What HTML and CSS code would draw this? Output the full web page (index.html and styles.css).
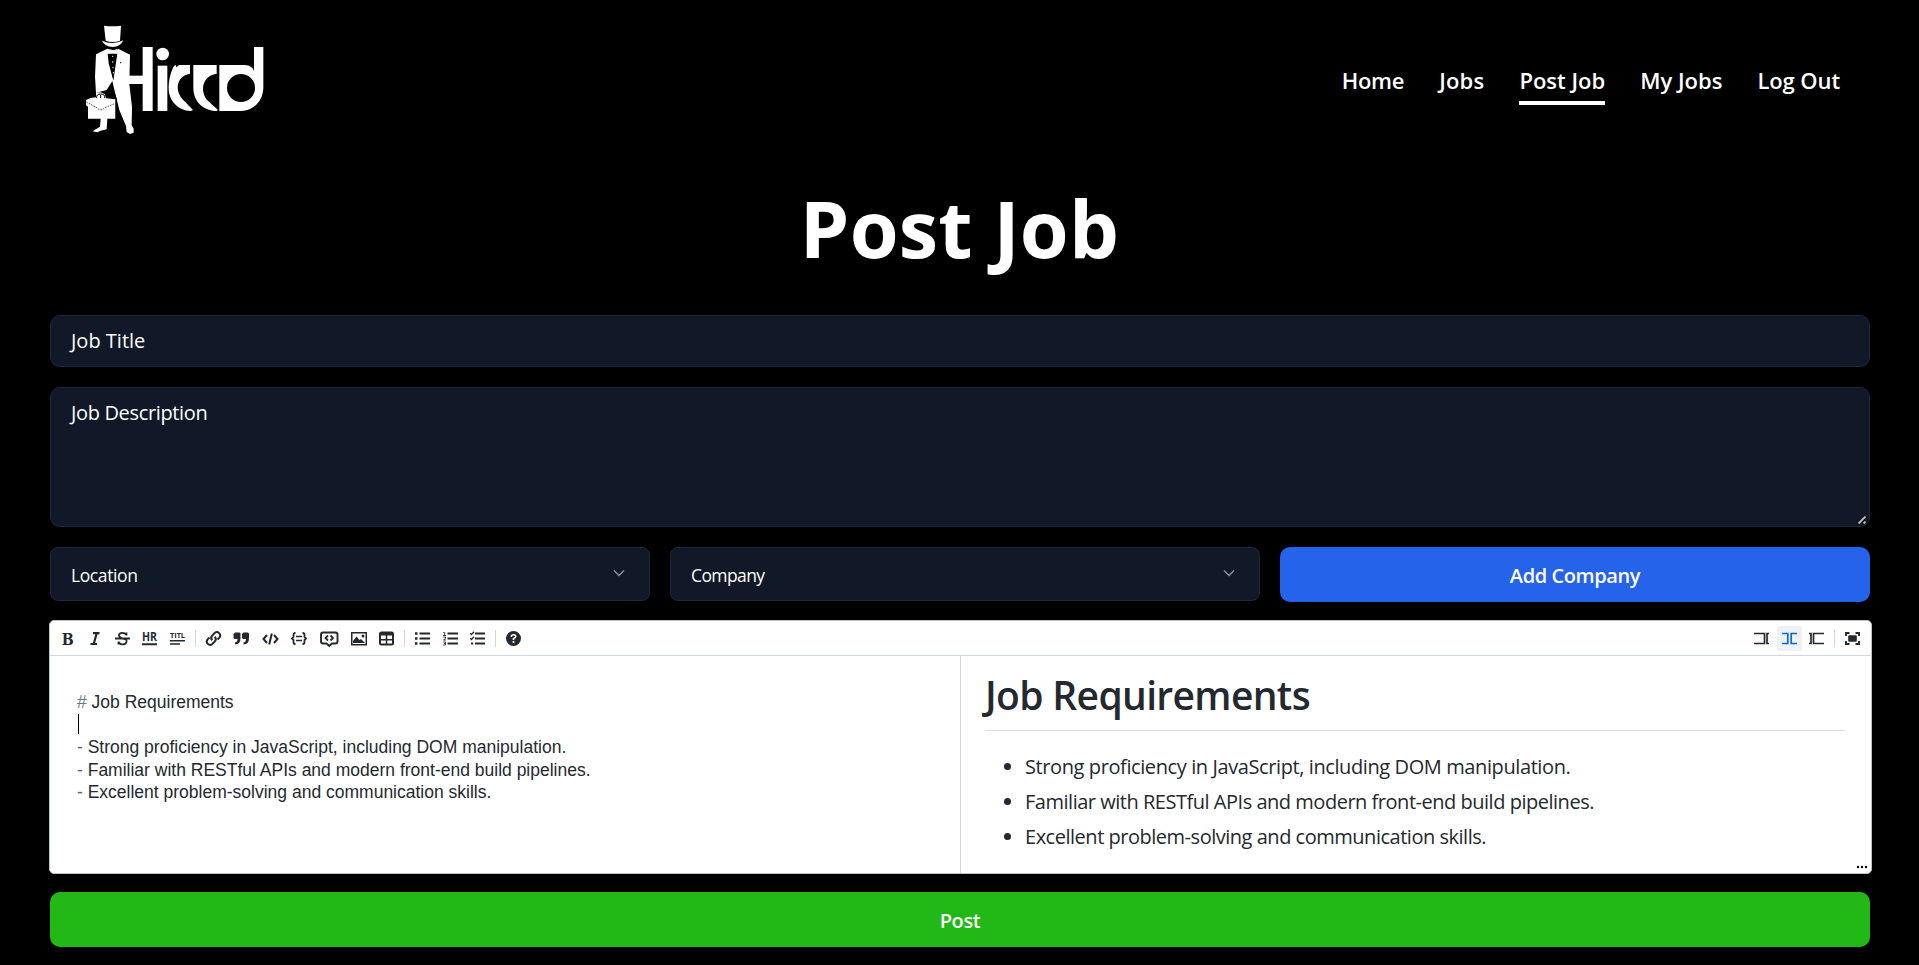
FILE: index.html
```html
<!DOCTYPE html>
<html lang="en">
<head>
<meta charset="utf-8">
<title>Post Job</title>
<link rel="stylesheet" href="styles.css">
</head>
<body>
<header class="header">
  <svg class="logo" viewBox="0 0 660 420" role="img" aria-label="Hiccd">
    <g fill="#fff">
      <path d="M102 47Q127 51 153 47L150 92Q128 100 107 92Z"/>
      <path d="M96 92Q128 106 160 91Q152 110 128 111Q104 110 96 92Z"/>
      <path d="M112 116L78 133L75 200L78 248L92 247L104 252L108 265L136 268V326H112L110 358L92 362L82 367L68 364L90 350L92 326H54V290L48 286V270L62 264L78 262V248L110 240L127 213L132 235L148 300L168 348L170 366L180 372L191 368V356L185 346L186 290L178 222L180 134L146 117L134 122L128 120Z"/>
      <rect x="170" y="197" width="50" height="25"/>
      <rect x="218" y="111" width="30" height="192"/>
      <circle cx="278" cy="132" r="19"/>
      <rect x="263" y="167" width="29" height="136"/>
      <path d="M360 165V192C325 194 306 240 345 275L369 300L362 303C324 302 296 272 296 234C296 210 302 186 312 168L318 165V172L328 165Z"/>
      <path d="M370 165H440V192C402 194 384 240 415 274L444 300L440 303C400 303 370 274 370 234Z"/>
      <path fill-rule="evenodd" d="M448 165H525Q546 167 552 183V111H580V234A67 69 0 0 1 513 303H448ZM471 234A42 42 0 1 0 555 234A42 42 0 1 0 471 234Z"/>
    </g>
    <path d="M113 131L142 131L137 165L130 212L124 190L116 160Z"/>
    <path d="M112 117L126 122L142 117V131L127 126L113 131Z" fill="#fff"/>
    <g fill="#fff"><circle cx="128" cy="139" r="2"/><circle cx="128" cy="156" r="2"/><circle cx="129" cy="172" r="2"/><circle cx="130" cy="188" r="2"/></g>
    <path d="M49 276L82 294Q92 305 103 294L136 280" fill="none" stroke="#000" stroke-width="2" stroke-dasharray="5 3"/>
    <path d="M80 264Q78 252 92 252Q106 252 104 264M92 254V264" fill="none" stroke="#000" stroke-width="3"/>
    <path d="M128 236L139 268V326" fill="none" stroke="#000" stroke-width="3"/>
    <circle cx="152" cy="158" r="2"/>
  </svg>
  <nav class="nav">
    <a class="nav-link">Home</a>
    <a class="nav-link">Jobs</a>
    <a class="nav-link is-active">Post Job</a>
    <a class="nav-link">My Jobs</a>
    <a class="nav-link">Log Out</a>
  </nav>
</header>
<main>
  <h1 class="title">Post Job</h1>
  <form class="form">
    <div class="field">Job Title</div>
    <div class="field area">Job Description
      <svg class="grip" viewBox="0 0 10 10"><path d="M1 9L9 1M6 9L9 6" stroke="#000" stroke-width="3"/><path d="M1.500 8.500L8.500 1.500M6.500 8.500L8.500 6.500" stroke="#b9bcc2" stroke-width="1.800"/></svg>
    </div>
    <div class="row">
      <div class="select location"><span>Location</span><svg class="chev" viewBox="0 0 14 14"><path d="M2 4.500L7 9.500L12 4.500"/></svg></div>
      <div class="select"><span class="company">Company</span><svg class="chev" viewBox="0 0 14 14"><path d="M2 4.500L7 9.500L12 4.500"/></svg></div>
      <div class="button blue">Add Company</div>
    </div>
    <section class="editor">
      <div class="toolbar">
        <div class="tools">
          <b class="tool"><svg width="15" viewBox="0 0 15 15"><text class="serif" x="1.800" y="13.700" font-size="17" textLength="12" lengthAdjust="spacingAndGlyphs">B</text></svg></b>
          <b class="tool"><svg width="15" viewBox="0 0 15 15"><path d="M6 2.200H12.500M3.500 13H10M9.700 2.200L6.700 13" fill="none" stroke-width="2.200"/></svg></b>
          <b class="tool"><svg width="15" viewBox="0 0 15 15"><path d="M11.500 4.500V1.500M11.300 4C10 1 4 1 4 4.500C4 6 6 7 8 7.500C11 8 12 9 11.500 11C10.500 14.500 4.500 14 3.700 11M3.500 13.500V10.500M0 7.500H15" fill="none" stroke-width="1.800"/></svg></b>
          <b class="tool"><svg width="15" viewBox="0 0 15 15"><text class="sans" x="0" y="10" font-size="11.500" textLength="15" lengthAdjust="spacingAndGlyphs">HR</text><path d="M0 13.300H15" stroke-width="2"/></svg></b>
          <b class="tool"><svg width="15" viewBox="0 0 15 15"><text class="sans" x="0" y="7.200" font-size="7.500" textLength="15" lengthAdjust="spacingAndGlyphs">TITL</text><path d="M0 9.800H15M0 13H10" stroke-width="1.600"/></svg></b>
          <i class="sep"></i>
          <b class="tool"><svg width="15" viewBox="0 0 15 15"><g fill="none" stroke-width="2"><path d="M6.300 9.200A3.400 3.400 0 0 1 6.100 4.600L8.700 2A3.300 3.300 0 0 1 13.400 6.600L11.500 8.500"/><path d="M8.700 5.800A3.400 3.400 0 0 1 8.900 10.400L6.300 13A3.300 3.300 0 0 1 1.600 8.400L3.500 6.500"/></g></svg></b>
          <b class="tool"><svg width="16" viewBox="0 0 16 15"><path stroke="none" d="M2 1.500H6.500L7.500 2.500V7Q7.500 13.500 2 13.500V11.500Q4.500 11 4.500 8H1.500L.500 7V3ZM10.500 1.500H15L16 2.500V7Q16 13.500 10.500 13.500V11.500Q13 11 13 8H10L9 7V3Z"/></svg></b>
          <b class="tool"><svg width="17" viewBox="0 0 17 15"><path d="M5 4L1.500 8L5 12M12 4L15.500 8L12 12M9.800 2.500L7.200 13.500" fill="none" stroke-width="2"/></svg></b>
          <b class="tool"><svg width="16" viewBox="0 0 16 15"><path d="M4.500 2H4Q2.500 2 2.500 4V6L1 7.500L2.500 9V11Q2.500 13 4 13H4.500M11.500 2H12Q13.500 2 13.500 4V6L15 7.500L13.500 9V11Q13.500 13 12 13H11.500" fill="none" stroke-width="1.800"/><path d="M5 5.500H11M5 9.500H11" stroke-width="1.400"/></svg></b>
          <b class="tool"><svg width="18.500" viewBox="0 0 18.500 15"><path d="M3 1.500H15.500Q17.500 1.500 17.500 3.500V10.500Q17.500 12.500 15.500 12.500H12L9.250 15L6.500 12.500H3Q1 12.500 1 10.500V3.500Q1 1.500 3 1.500Z" fill="none" stroke-width="1.900"/><path d="M8 4.500L5.500 7L8 9.500M10.500 4.500L13 7L10.500 9.500" fill="none" stroke-width="1.800"/></svg></b>
          <b class="tool"><svg width="16" viewBox="0 0 16 15"><rect x=".750" y="1.750" width="14.500" height="12" fill="none" stroke-width="1.500"/><path stroke="none" d="M2 12V10L5.500 5.500L8.500 9L10 8L14 12Z"/><circle cx="12" cy="5" r="1.500" stroke="none"/></svg></b>
          <b class="tool"><svg width="15" viewBox="0 0 15 15"><rect x="1" y="1.500" width="13" height="12" rx="1.500" fill="none" stroke-width="2"/><path d="M1 3H14" stroke-width="3"/><path d="M7.500 4V13M1 8.700H14" stroke-width="1.500"/></svg></b>
          <i class="sep"></i>
          <b class="tool"><svg width="15" viewBox="0 0 15 15"><path d="M4.500 2.500H15M4.500 7.500H15M4.500 12.500H15" stroke-width="1.800"/><path d="M0 2.500H2.500M0 7.500H2.500M0 12.500H2.500" stroke-width="2.400"/></svg></b>
          <b class="tool"><svg width="15" viewBox="0 0 15 15"><path d="M4.500 2.500H15M4.500 7.500H15M4.500 12.500H15" stroke-width="1.800"/><path d="M.300 1.500H1.700V4.500M0 4.500H3M.300 6H2.500V7.500L.500 9H3M.300 11H2.500V14H.300M1 12.500H2.500" fill="none" stroke-width=".9"/></svg></b>
          <b class="tool"><svg width="15" viewBox="0 0 15 15"><path d="M5 2.500H15M5 7.500H15M5 12.500H15" stroke-width="1.800"/><path d="M.200 2.300L1.500 3.500L4 .800M.200 7.300L1.500 8.500L4 5.800" fill="none" stroke-width="1.300"/><path d="M1 12.500H3.200" stroke-width="2.200"/></svg></b>
          <i class="sep"></i>
          <b class="tool"><svg width="15" viewBox="0 0 15 15"><circle cx="7.500" cy="7.500" r="7.500" stroke="none"/><path d="M5.200 5.800Q5.400 3.700 7.500 3.700Q9.800 3.700 9.700 5.600Q9.500 7 7.500 7.500V9" fill="none" stroke="#fff" stroke-width="1.600"/><circle cx="7.500" cy="11" r="1.100" fill="#fff" stroke="none"/></svg></b>
        </div>
        <div class="tools">
          <b class="tool"><svg width="15" viewBox="0 0 15 15"><path d="M0 2.500H10.500V12.500H0M15 2.500H13V12.500H15" fill="none" stroke-width="1.700"/></svg></b>
          <b class="tool is-on"><svg width="15" viewBox="0 0 15 15"><path d="M0 2.500H5.800V12.500H0M15 2.500H9.200V12.500H15" fill="none" stroke-width="1.700"/></svg></b>
          <b class="tool"><svg width="15" viewBox="0 0 15 15"><path d="M0 2.500H2V12.500H0M15 2.500H4.500V12.500H15" fill="none" stroke-width="1.700"/></svg></b>
          <i class="sep"></i>
          <b class="tool"><svg width="15" viewBox="0 0 15 15"><rect x="3.200" y="4.200" width="8.600" height="6.600" rx="1" stroke="none"/><path d="M1 5V2H4.500M10.500 2H14V5M14 10V13H10.500M4.500 13H1V10" fill="none" stroke-width="1.900"/></svg></b>
        </div>
      </div>
      <div class="panes">
        <div class="source">
          <p><span class="mark">#</span> Job Requirements</p>
          <p class="caret-line"><span class="caret"></span></p>
          <p><span class="dash">-</span> Strong proficiency in JavaScript, including DOM manipulation.</p>
          <p><span class="dash">-</span> Familiar with RESTful APIs and modern front-end build pipelines.</p>
          <p><span class="dash">-</span> Excellent problem-solving and communication skills.</p>
        </div>
        <div class="preview">
          <h2>Job Requirements</h2>
          <ul>
            <li>Strong proficiency in JavaScript, including DOM manipulation.</li>
            <li>Familiar with RESTful APIs and modern front-end build pipelines.</li>
            <li>Excellent problem-solving and communication skills.</li>
          </ul>
          <svg class="dots" viewBox="0 0 12 4"><circle cx="2" cy="2" r="1.200"/><circle cx="6" cy="2" r="1.200"/><circle cx="10" cy="2" r="1.200"/></svg>
        </div>
      </div>
    </section>
    <div class="button green">Post</div>
  </form>
</main>
</body>
</html>
```
FILE: styles.css
```css
* { box-sizing: border-box; }
body { margin: 0; height: 965px; overflow: hidden; background: #000; color: #fff; font-family: "Open Sans", "Noto Sans", sans-serif; }
svg { display: block; }
.header { height: 161px; padding: 0 79px 0 70px; display: flex; align-items: center; justify-content: space-between; }
.logo { width: 220px; height: 140px; margin-top: -1px; }
.nav { display: flex; gap: 35px; }
.nav-link { padding: 8px 0 4px; border-bottom: 4px solid transparent; line-height: 33px; font-size: 22px; font-weight: 600; letter-spacing: 0; white-space: nowrap; }
.nav-link:nth-child(1) { letter-spacing: -0.3px; }
.nav-link:nth-child(2) { letter-spacing: 0.2px; }
.nav-link:nth-child(5) { letter-spacing: -0.1px; }
.is-active { border-color: #fff; }
.title { margin: 0; padding-top: 27px; line-height: 80px; font-size: 79px; font-weight: 700; letter-spacing: 0.2px; text-align: center; }
.form { margin: 47px 49px 0 50px; display: flex; flex-direction: column; }
.field { position: relative; height: 52px; padding: 11px 20px; border: 1px solid #1f2937; border-radius: 10px; background: #111827; font-size: 20px; line-height: 28px; letter-spacing: 0; }
.area { height: 140px; margin-top: 20px; letter-spacing: -0.35px; }
.grip { position: absolute; right: 2px; bottom: 1px; width: 10px; height: 10px; }
.row { display: flex; gap: 20px; margin-top: 20px; height: 55px; }
.select { width: 590px; height: 54px; padding: 2px 23px 0 20px; display: flex; align-items: center; justify-content: space-between; border: 1px solid #1f2937; border-radius: 8px; background: #111827; font-size: 17.5px; letter-spacing: -0.4px; }
.company { letter-spacing: -0.6px; }
.location { width: 600px; }
.chev { width: 14px; height: 14px; margin-top: -4px; fill: none; stroke: #8b8f98; stroke-width: 1.5; }
.button { height: 55px; display: flex; align-items: center; justify-content: center; border-radius: 10px; font-size: 20px; font-weight: 600; letter-spacing: -0.4px; }
.blue { flex: 1; padding-top: 2px; background: #2563eb; }
.green { background: #22b916; padding-top: 2px; }
.editor { margin: 18px -1.5px 18px -1px; height: 254px; display: flex; flex-direction: column; border: 1px solid #b8c0c9; border-radius: 5px; background: #fff; color: #24292f; overflow: hidden; }
.toolbar { height: 35px; padding: 0 5.5px 0 4.5px; display: flex; align-items: center; justify-content: space-between; border-bottom: 1px solid #d0d7de; }
.tools { display: flex; align-items: center; gap: 2.5px; }
.tool { padding: 5px; border-radius: 2px; fill: #24292f; stroke: #24292f; }
.tool svg { height: 15px; overflow: visible; }
.tool text { stroke: none; font-weight: 700; }
.serif { font-family: "DejaVu Serif", serif; }
.sans { font-family: "Open Sans", sans-serif; }
.is-on { background: #eff1f3; fill: #0969da; stroke: #0969da; }
.sep { width: 1px; height: 17px; margin: 0 2.5px; background: #d0d7de; }
.panes { flex: 1; display: flex; }
.source { width: 911px; padding: 35px 27px; border-right: 1px solid #d0d7de; font-family: "Liberation Sans", sans-serif; font-size: 17.5px; line-height: 22.5px; }
.source p { margin: 0; height: 22.5px; }
.caret { display: block; width: 1px; height: 20px; margin-left: 1px; background: #000; }
.mark { color: #6e7781; }
.dash { color: #57606a; }
.preview { position: relative; flex: 1; padding: 14px 25.5px 0 24px; }
.preview h2 { margin: 0; height: 61px; border-bottom: 1px solid #d8dee4; font-size: 39px; line-height: 50px; font-weight: 600; letter-spacing: -0.65px; }
.preview ul { margin: 18px 0 0; padding-left: 40px; font-size: 20px; line-height: 35px; letter-spacing: -0.48px; }
.preview li:first-child { letter-spacing: -0.4px; }
.dots { position: absolute; right: 3px; bottom: 4px; width: 12px; height: 4px; }
```
